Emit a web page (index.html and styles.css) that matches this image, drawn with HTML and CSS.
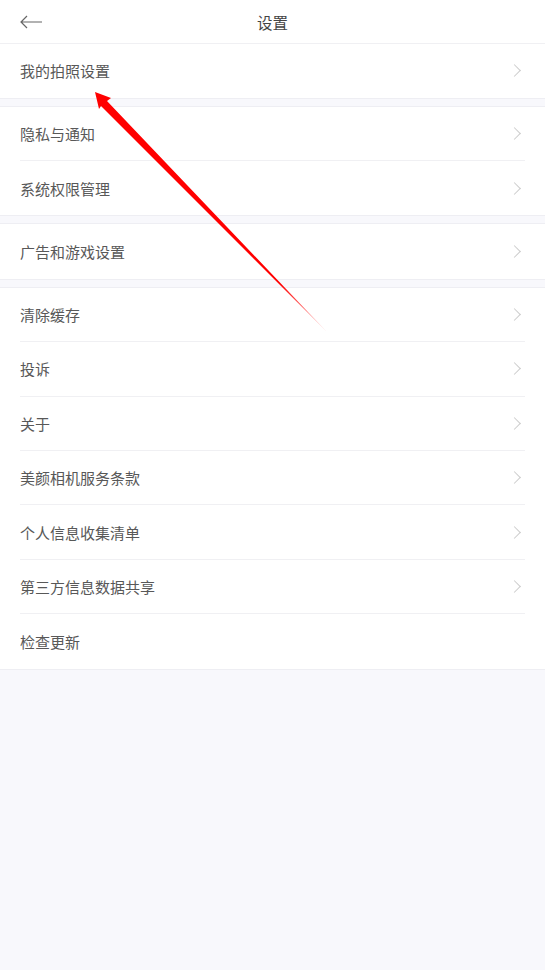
FILE: index.html
```html
<!DOCTYPE html>
<html lang="zh-CN">
<head>
    <meta charset="utf-8">
    <title>设置</title>
    <link rel="stylesheet" href="styles.css">
</head>
<body>
    <header class="topbar">
        <svg class="back-icon" width="24" height="16" viewBox="0 0 24 16">
            <path d="M23 8H2M8 2L2 8l6 6" fill="none" stroke="#666" stroke-width="1.2"/>
        </svg>
        <h1>设置</h1>
    </header>

    <main class="settings">
        <section class="group">
            <div class="row">我的拍照设置<span class="chevron"></span></div>
        </section>
        <section class="group">
            <div class="row">隐私与通知<span class="chevron"></span></div>
            <div class="row">系统权限管理<span class="chevron"></span></div>
        </section>
        <section class="group">
            <div class="row">广告和游戏设置<span class="chevron"></span></div>
        </section>
        <section class="group">
            <div class="row">清除缓存<span class="chevron"></span></div>
            <div class="row">投诉<span class="chevron"></span></div>
            <div class="row">关于<span class="chevron"></span></div>
            <div class="row">美颜相机服务条款<span class="chevron"></span></div>
            <div class="row">个人信息收集清单<span class="chevron"></span></div>
            <div class="row">第三方信息数据共享<span class="chevron"></span></div>
            <div class="row">检查更新</div>
        </section>
    </main>

    <!-- annotation arrow drawn over the list -->
    <svg class="annotation" width="545" height="400" viewBox="0 0 545 400">
        <defs>
            <linearGradient id="fade" x1="95" y1="92" x2="326" y2="331" gradientUnits="userSpaceOnUse">
                <stop offset="0" stop-color="#ff0000"/>
                <stop offset="0.8" stop-color="#ff0000"/>
                <stop offset="1" stop-color="#ff0000" stop-opacity="0.2"/>
            </linearGradient>
        </defs>
        <polygon points="95,92 111,98 107,101 327,332 101,106 99,109" fill="url(#fade)"/>
    </svg>
</body>
</html>
```

FILE: styles.css
```css
body {
    margin: 0;
    background: #f8f8fc;
    font-family: "Noto Sans CJK SC", "Noto Sans", sans-serif;
    color: #585858;
}

.topbar {
    position: relative;
    height: 43px;
    background: #fff;
    border-bottom: 1px solid #f0f0f3;
    display: flex;
    align-items: center;
    justify-content: center;
}

.topbar h1 {
    margin: 0;
    font-size: 15.5px;
    font-weight: normal;
    color: #444;
}

.back-icon {
    position: absolute;
    left: 19px;
    top: 14px;
}

.group {
    background: #fff;
    border-bottom: 1px solid #eeeef3;
    margin-bottom: 7px;
}

.group + .group {
    border-top: 1px solid #eeeef3;
}

.group:first-child .row {
    height: 53.6px;
}

.group:last-child {
    margin-bottom: 0;
}

.row {
    height: 54.4px;
    box-sizing: border-box;
    margin: 0 20px;
    padding-right: 6px;
    display: flex;
    align-items: center;
    justify-content: space-between;
    font-size: 15px;
    border-bottom: 1px solid #f0f0f3;
}

.row:last-child {
    border-bottom: 0;
}

.chevron {
    width: 8px;
    height: 8px;
    border-top: 1.2px solid #ccc;
    border-right: 1.2px solid #ccc;
    transform: rotate(45deg);
}

.annotation {
    position: absolute;
    left: 0;
    top: 0;
    pointer-events: none;
}
```
